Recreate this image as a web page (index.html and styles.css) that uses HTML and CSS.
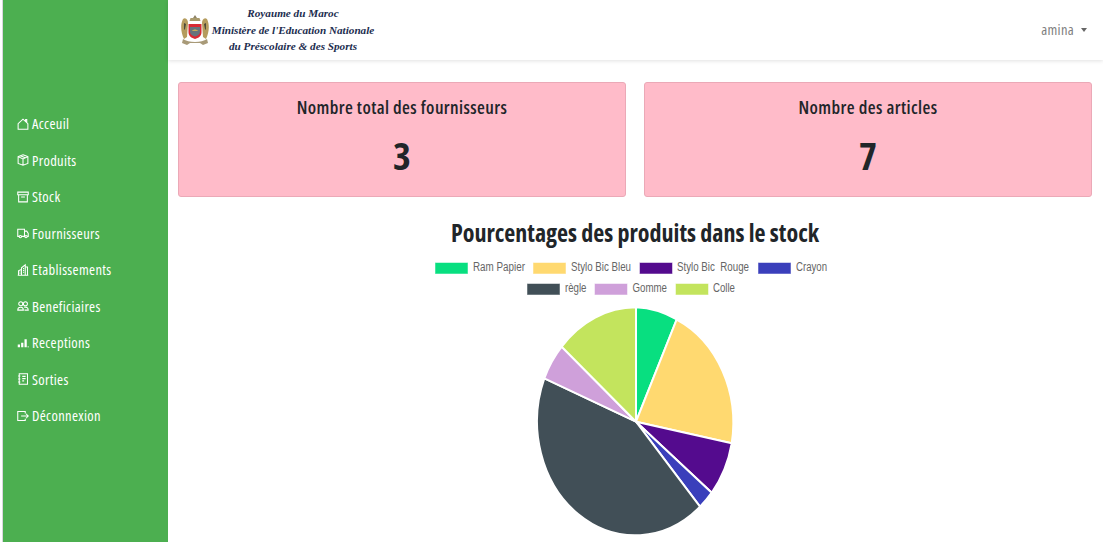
FILE: index.html

```html
<!DOCTYPE html>
<html lang="fr">
<head>
  <meta charset="UTF-8">
  <title>Tableau de bord</title>
  <link rel="stylesheet" href="styles.css">
</head>
<body>

  <aside class="sidebar">
    <nav class="side-nav">
      <a href="#"><svg viewBox="0 0 16 16"><path d="M1.500 15V7.500L8 1.500l6.500 6V15zM11.500 4.500V2h1.500v4"/></svg>Acceuil</a>
      <a href="#"><svg viewBox="0 0 16 16"><path d="M8 1l6.500 2.500v9L8 15l-6.500-2.500v-9zM1.500 3.500L8 6.500l6.500-3M8 6.500V15M4.500 2.300l6.500 2.800"/></svg>Produits</a>
      <a href="#"><svg viewBox="0 0 16 16"><path d="M1 1.500h14v3.500H1zM2.200 5v9.500h11.600V5M5.500 8h5"/></svg>Stock</a>
      <a href="#"><svg viewBox="0 0 16 16"><path d="M3 12.500H1V3h9v9.500H6M10 5.500h3l2 3v4h-1.500M10 12.500h.8"/><circle cx="4.500" cy="12.800" r="1.600"/><circle cx="12" cy="12.800" r="1.600"/></svg>Fournisseurs</a>
      <a href="#"><svg viewBox="0 0 16 16"><path d="M1 15h14M2 15V9l4-2v8M6 15V5l5-4v14M11 15V4h3v11M3.500 10.500h1M3.500 12.500h1M8 6h1.500M8 8.500h1.500M8 11h1.500"/></svg>Etablissements</a>
      <a href="#"><svg viewBox="0 0 16 16"><circle cx="5" cy="5" r="2.700"/><circle cx="11.200" cy="5" r="2.700"/><path d="M1 13.500c0-5 7.500-5 7.500 0zM10 13.500h5c0-3.500-3-4.500-5.500-3.700"/></svg>Beneficiaires</a>
      <a href="#"><svg viewBox="0 0 16 16"><path class="solid" d="M1 10h3v3.500H1zM5.500 7.500h3v6h-3zM10 3h3v10.500h-3zM14 12.500h2v1h-2z"/></svg>Receptions</a>
      <a href="#"><svg viewBox="0 0 16 16"><path d="M3 1h11v14H3zM1.500 4h3M1.500 8h3M1.500 12h3M7 4.500h4.500M7 7.500h4.500M7 10.500h2.500"/></svg>Sorties</a>
      <a href="#"><svg viewBox="0 0 16 16"><path d="M11 4.500V2H1v12h10v-2.500M5.500 8H15M12 5l3 3-3 3"/></svg>Déconnexion</a>
    </nav>
  </aside>

  <div class="content">
    <header class="topbar">
      <a class="brand" href="#">
        <svg class="emblem" viewBox="0 0 28 32">
          <path d="M14 0l2 3h-4z" fill="#8d8468"/>
          <path d="M9.500 3h9l1 3h-11z" fill="#a99a6c"/>
          <path d="M2 4c3-2 5 1 5 4l-1 14-3 2C0 18-1 10 2 4zM26 4c-3-2-5 1-5 4l1 14 3 2c3-6 4-14 1-20z" fill="#b59c5e"/>
          <path d="M3 8l2 1-1 5-1 1zM25 8l-2 1 1 5 1 1z" fill="#4d4a38"/>
          <path d="M7.500 9h13v8c0 4-3 6-6.500 7-3.500-1-6.500-3-6.500-7z" fill="#d82a34"/>
          <path d="M9 12h10v5c0 2-2 3.500-5 4.500-3-1-5-2.500-5-4.500z" fill="#66747c"/>
          <path d="M11 16c1-2 5-2 6 0z" fill="#c9ad58"/>
          <path d="M2 24c3 2 7 3 12 3s9-1 12-3l1 4-5 2-3-2H9l-3 2-5-2z" fill="#a89a78"/>
        </svg>
        <span class="brand-text">
          <span>Royaume du Maroc</span>
          <span>Ministère de l'Education Nationale</span>
          <span>du Préscolaire &amp; des Sports</span>
        </span>
      </a>
      <a class="user" href="#">amina<i class="caret"></i></a>
    </header>

    <main class="page">
      <section class="cards">
        <div class="card">
          <h5>Nombre total des fournisseurs</h5>
          <p>3</p>
        </div>
        <div class="card">
          <h5>Nombre des articles</h5>
          <p>7</p>
        </div>
      </section>

      <h2 class="chart-title">Pourcentages des produits dans le stock</h2>

      <!-- viewBox is in page pixels -->
      <svg class="chart" viewBox="168 250 925 292">
        <g class="legend">
          <rect x="435" y="262.500" width="33" height="11.500" fill="#08df80"/>
          <text x="473" y="271.300" textLength="52" lengthAdjust="spacingAndGlyphs">Ram Papier</text>
          <rect x="533" y="262.500" width="33" height="11.500" fill="#ffd970"/>
          <text x="571" y="271.300" textLength="60" lengthAdjust="spacingAndGlyphs">Stylo Bic Bleu</text>
          <rect x="639.500" y="262.500" width="33" height="11.500" fill="#540b8e"/>
          <text x="677" y="271.300" textLength="72" lengthAdjust="spacingAndGlyphs">Stylo Bic  Rouge</text>
          <rect x="758" y="262.500" width="33" height="11.500" fill="#3a3fbb"/>
          <text x="796" y="271.300" textLength="31" lengthAdjust="spacingAndGlyphs">Crayon</text>
          <rect x="527" y="283.500" width="33" height="11.500" fill="#414f57"/>
          <text x="565" y="292.300" textLength="21.500" lengthAdjust="spacingAndGlyphs">règle</text>
          <rect x="594.500" y="283.500" width="33" height="11.500" fill="#cfa0da"/>
          <text x="632.500" y="292.300" textLength="34.500" lengthAdjust="spacingAndGlyphs">Gomme</text>
          <rect x="675.500" y="283.500" width="33" height="11.500" fill="#c3e45d"/>
          <text x="713" y="292.300" textLength="22" lengthAdjust="spacingAndGlyphs">Colle</text>
        </g>
        <g class="pie">
          <path d="M636 421.700L636 307.300A98 114 0 0 1 676.700 319.500Z" fill="#08df80"/>
          <path d="M636 421.700L676.700 319.500A98 114 0 0 1 731.700 443.300Z" fill="#ffd970"/>
          <path d="M636 421.700L731.700 443.300A98 114 0 0 1 711.700 492.700Z" fill="#540b8e"/>
          <path d="M636 421.700L711.700 492.700A98 114 0 0 1 700 506.700Z" fill="#3a3fbb"/>
          <path d="M636 421.700L700 506.700A98 114 0 0 1 544.300 378.300Z" fill="#414f57"/>
          <path d="M636 421.700L544.300 378.300A98 114 0 0 1 561.700 346.700Z" fill="#cfa0da"/>
          <path d="M636 421.700L561.700 346.700A98 114 0 0 1 636 307.300Z" fill="#c3e45d"/>
        </g>
      </svg>
    </main>
  </div>

</body>
</html>
```

FILE: styles.css

```css
* {
  box-sizing: border-box;
}

html, body {
  height: 100%;
}

body {
  margin: 0;
  display: flex;
  padding-left: 2px;
  overflow: hidden;
  background-color: #fff;
  color: #212529;
  font-family: "Open Sans", "Noto Sans", sans-serif;
  font-stretch: 85%;
}

/* sidebar */
.sidebar {
  flex: 0 0 166px;
  background-color: #4caf50;
  border-left: 1px solid #d9d6de;
  padding-top: 105.500px;
}

.side-nav a {
  display: flex;
  align-items: center;
  height: 36.500px;
  padding-left: 14px;
  color: #fff;
  font-size: 14.500px;
  letter-spacing: .35px;
  text-decoration: none;
}

.side-nav svg {
  width: 12px;
  height: 14px;
  margin-right: 3px;
  fill: none;
  stroke: #fff;
  stroke-width: 1.400;
}

.side-nav svg .solid {
  fill: #fff;
  stroke: none;
}

/* top bar */
.content {
  flex: 1;
  min-width: 0;
}

.topbar {
  height: 60px;
  display: flex;
  align-items: center;
  justify-content: space-between;
  padding: 0 16px 0 13px;
  box-shadow: 0 1px 4px rgba(0, 0, 0, .12);
}

.brand {
  display: flex;
  align-items: center;
  gap: 3px;
  text-decoration: none;
}

.emblem {
  width: 28px;
  height: 32px;
  margin-bottom: -1px;
  filter: blur(.4px);
}

.brand-text {
  display: flex;
  flex-direction: column;
  align-items: center;
  width: 162px;
  color: #1c2d4f;
  font-family: "Liberation Serif", serif;
  font-size: 11.200px;
  font-style: italic;
  font-weight: bold;
  line-height: 16.500px;
  white-space: nowrap;
}

.user {
  margin-bottom: 2px;
  color: #808080;
  font-size: 14.500px;
  letter-spacing: .3px;
  text-decoration: none;
}

.caret {
  display: inline-block;
  margin-left: 7px;
  vertical-align: 3px;
  border-top: 4px solid #666;
  border-left: 3.500px solid transparent;
  border-right: 3.500px solid transparent;
}

/* main area */
.page {
  padding: 22px 11px 0 10px;
}

.cards {
  display: grid;
  grid-template-columns: 1fr 1fr;
  gap: 18px;
}

.card {
  height: 115px;
  padding-top: 12px;
  text-align: center;
  background-color: #ffbbc9;
  border: 1px solid #eba9b7;
  border-radius: 3px;
}

.card h5 {
  margin: 0;
  font-size: 18px;
  font-weight: 600;
  letter-spacing: .4px;
  line-height: 24px;
}

.card p {
  margin: 11px 0 0;
  font-size: 38px;
  font-weight: 700;
  line-height: 50px;
}

.chart-title {
  margin: 21px 0 0;
  text-align: center;
  font-size: 24px;
  font-weight: 700;
  line-height: 30px;
}

.chart {
  display: block;
  width: 925px;
  height: 292px;
  margin: 2px 0 0 -10px;
}

.legend text {
  fill: #666;
  font-family: "Liberation Sans", sans-serif;
  font-size: 12px;
  white-space: pre;
}

.legend rect {
  stroke: rgba(255, 255, 255, .5);
}

.pie path {
  stroke: #fff;
  stroke-width: 2;
}
```
